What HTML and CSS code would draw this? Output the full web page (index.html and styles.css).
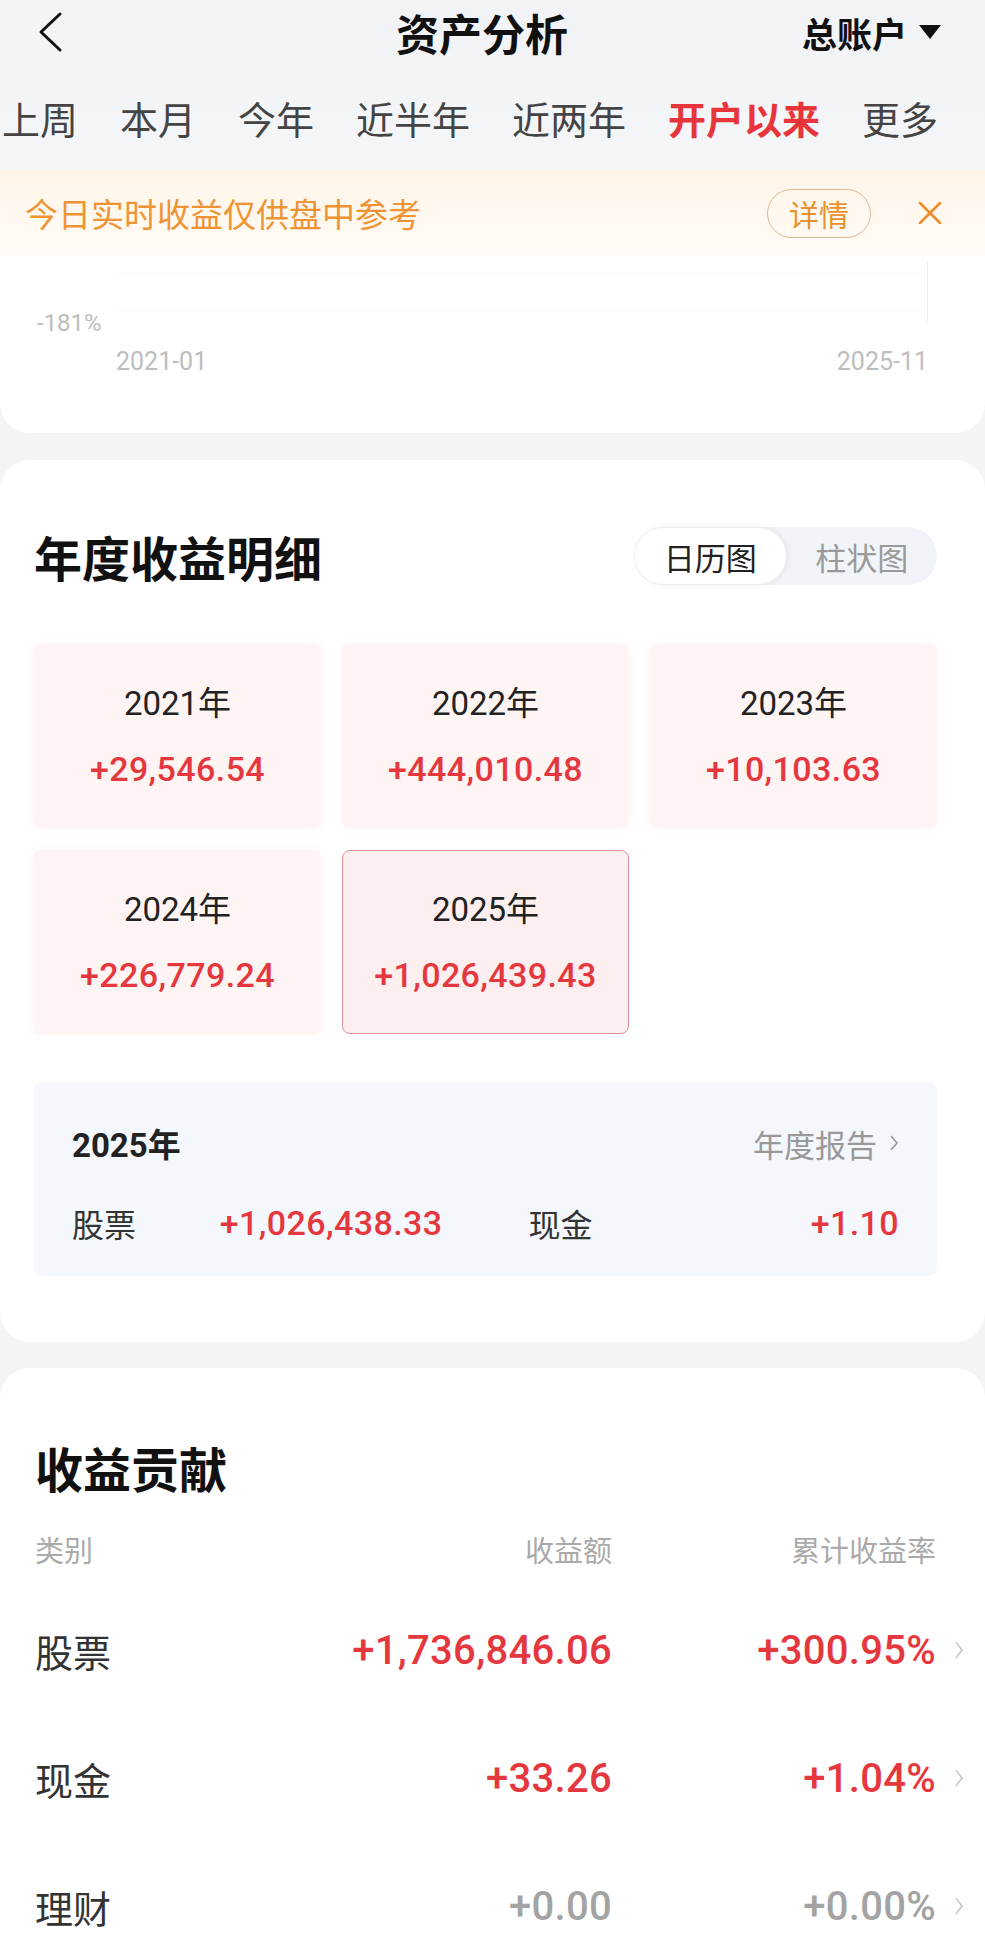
FILE: index.html
```html
<!DOCTYPE html>
<html lang="zh-CN">
<head>
  <meta charset="UTF-8" />
  <meta name="viewport" content="width=device-width, initial-scale=1.0" />
  <title>资产分析</title>
  <link rel="stylesheet" href="styles.css">
</head>
<body>
  <header class="top">
    <div class="nav">
      <span class="back">
        <svg width="26" height="42" viewBox="0 0 26 42"><polyline points="23,3 4,21 23,39" fill="none" stroke="#111" stroke-width="3" stroke-linecap="round" stroke-linejoin="round"/></svg>
      </span>
      <h1 class="title">资产分析</h1>
      <span class="account">总账户
        <svg width="22" height="14" viewBox="0 0 22 14"><polygon points="0,0 22,0 11,14" fill="#111"/></svg>
      </span>
    </div>
    <nav class="tabs">
      <span>上周</span>
      <span>本月</span>
      <span>今年</span>
      <span>近半年</span>
      <span>近两年</span>
      <span class="active">开户以来</span>
      <span>更多</span>
    </nav>
    <div class="notice">
      <span class="notice-text">今日实时收益仅供盘中参考</span>
      <span class="pill">详情</span>
      <svg class="close" width="24" height="22" viewBox="0 0 24 22"><path d="M2 1 L22 21 M22 1 L2 21" stroke="#ee8c2b" stroke-width="2.6" stroke-linecap="round"/></svg>
    </div>
  </header>

  <!-- tail of the return curve card -->
  <section class="card chart">
    <div class="plot-row">
      <span class="y-label">-181%</span>
      <div class="plot"></div>
    </div>
    <div class="x-labels">
      <span>2021-01</span>
      <span>2025-11</span>
    </div>
  </section>

  <section class="card yearly">
    <div class="section-head">
      <h2>年度收益明细</h2>
      <div class="toggle">
        <span class="on">日历图</span>
        <span>柱状图</span>
      </div>
    </div>

    <div class="years">
      <div class="year-card">
        <span class="year">2021年</span>
        <span class="num up">+29,546.54</span>
      </div>
      <div class="year-card">
        <span class="year">2022年</span>
        <span class="num up">+444,010.48</span>
      </div>
      <div class="year-card">
        <span class="year">2023年</span>
        <span class="num up">+10,103.63</span>
      </div>
      <div class="year-card">
        <span class="year">2024年</span>
        <span class="num up">+226,779.24</span>
      </div>
      <div class="year-card selected">
        <span class="year">2025年</span>
        <span class="num up">+1,026,439.43</span>
      </div>
    </div>

    <div class="summary">
      <div class="summary-head">
        <span class="summary-year">2025年</span>
        <span class="report">年度报告
          <svg width="10" height="20" viewBox="0 0 10 20"><polyline points="2,3 8,10 2,17" fill="none" stroke="#999" stroke-width="1.6"/></svg>
        </span>
      </div>
      <div class="summary-body">
        <div class="pair"><span>股票</span><span class="num up">+1,026,438.33</span></div>
        <div class="pair"><span>现金</span><span class="num up">+1.10</span></div>
      </div>
    </div>
  </section>

  <section class="card contrib">
    <h2>收益贡献</h2>
    <div class="row head">
      <span>类别</span>
      <span class="right">收益额</span>
      <span class="right">累计收益率</span>
      <span></span>
    </div>
    <div class="row">
      <span class="name">股票</span>
      <span class="num up right">+1,736,846.06</span>
      <span class="num up right">+300.95%</span>
      <svg class="chev" width="10" height="24" viewBox="0 0 10 24"><polyline points="2,4 8,12 2,20" fill="none" stroke="#c4c4c4" stroke-width="1.5"/></svg>
    </div>
    <div class="row">
      <span class="name">现金</span>
      <span class="num up right">+33.26</span>
      <span class="num up right">+1.04%</span>
      <svg class="chev" width="10" height="24" viewBox="0 0 10 24"><polyline points="2,4 8,12 2,20" fill="none" stroke="#c4c4c4" stroke-width="1.5"/></svg>
    </div>
    <div class="row">
      <span class="name">理财</span>
      <span class="num flat right">+0.00</span>
      <span class="num flat right">+0.00%</span>
      <svg class="chev" width="10" height="24" viewBox="0 0 10 24"><polyline points="2,4 8,12 2,20" fill="none" stroke="#c4c4c4" stroke-width="1.5"/></svg>
    </div>
  </section>
</body>
</html>
```

FILE: styles.css
```css
* {
  box-sizing: border-box;
}
body {
  margin: 0;
  width: 985px;
  background: #f3f4f6;
  color: #222;
  font-family: "Noto Sans CJK SC", sans-serif;
  overflow-x: hidden;
}
h1, h2 {
  margin: 0;
}

/* header */
.top {
  background: linear-gradient(#f2f3f6, #f6f7f9);
}
.nav {
  height: 64px;
  padding: 0 44px 0 37px;
  display: grid;
  grid-template-columns: 1fr auto 1fr;
  align-items: center;
}
.back {
  display: flex;
}
.title {
  font-size: 43px;
  font-weight: 600;
  color: #111;
  line-height: 64px;
  margin-right: 14px;
}
.account {
  justify-self: end;
  display: flex;
  align-items: center;
  gap: 12px;
  font-size: 35px;
  font-weight: 600;
  color: #111;
}
.tabs {
  height: 106px;
  display: flex;
  align-items: center;
  gap: 42px;
  padding-left: 2px;
  font-size: 38px;
  color: #444;
  white-space: nowrap;
  overflow: hidden;
}
.tabs .active {
  color: #e8343b;
  font-weight: 700;
}
.notice {
  height: 86px;
  padding: 0 43px 0 25px;
  display: flex;
  align-items: center;
  background: linear-gradient(#fff5e8, #fffbf6);
}
.notice-text {
  flex: 1;
  font-size: 33px;
  color: #ef9434;
}
.pill {
  width: 104px;
  height: 49px;
  border: 1.5px solid #dcb898;
  border-radius: 25px;
  display: flex;
  align-items: center;
  justify-content: center;
  font-size: 30px;
  color: #e8922f;
  margin-right: 47px;
}

/* cards */
.card {
  background: #fff;
  border-radius: 30px;
}
.chart {
  border-radius: 0 0 30px 30px;
  padding: 6px 57px 56px 37px;
  font-family: Roboto, sans-serif;
  font-size: 24px;
  color: #bdbdbd;
}
.plot-row {
  height: 75px;
  display: flex;
  align-items: flex-start;
}
.y-label {
  width: 79px;
  align-self: flex-end;
  line-height: 28px;
}
.plot {
  flex: 1;
  height: 61px;
  border-right: 1.5px solid #eeeeee;
  background:
    linear-gradient(#fafafa, #fafafa) 0 11px / 100% 1px no-repeat,
    linear-gradient(#fafafa, #fafafa) 0 48px / 100% 1px no-repeat;
}
.x-labels {
  margin: 10px 0 0 79px;
  line-height: 30px;
  font-size: 25px;
  display: flex;
  justify-content: space-between;
}

.yearly {
  margin-top: 27px;
  padding: 67px 48px 66px 34px;
}
.section-head {
  height: 58px;
  display: flex;
  align-items: center;
  justify-content: space-between;
}
h2 {
  font-size: 48px;
  font-weight: 700;
  color: #111;
  line-height: 58px;
}
.toggle {
  width: 303px;
  height: 58px;
  border-radius: 29px;
  background: #f1f4f8;
  display: flex;
  font-size: 31px;
  color: #999;
}
.toggle span {
  flex: 1;
  display: flex;
  align-items: center;
  justify-content: center;
}
.toggle .on {
  background: #fff;
  color: #222;
  border-radius: 29px;
  border: 1px solid #eceef1;
  box-shadow: 2px 0 6px rgba(0, 0, 0, 0.06);
}

.num {
  font-family: Roboto, "Noto Sans CJK SC", sans-serif;
  font-weight: 500;
  font-size: 34px;
  letter-spacing: 0.4px;
}
.up {
  color: #e5383e;
}
.flat {
  color: #a3a3a3;
}

.years {
  margin-top: 59px;
  display: grid;
  grid-template-columns: repeat(3, 1fr);
  grid-auto-rows: 184px;
  gap: 22px 21px;
}
.year-card {
  display: flex;
  flex-direction: column;
  align-items: center;
  justify-content: center;
  gap: 25px;
  background: #fff4f4;
  box-shadow: 0 0 8px 2px #fff8f8;
  border-radius: 6px;
}
.year-card .year {
  font-family: Roboto, "Noto Sans CJK SC", sans-serif;
  font-size: 33px;
  color: #222;
  line-height: 40px;
}
.year-card .num {
  line-height: 40px;
}
.year-card.selected {
  background: #fdeef0;
  border: 1.5px solid #e19096;
  box-shadow: none;
  border-radius: 8px;
}

.summary {
  margin-top: 48px;
  height: 194px;
  padding: 41px 38px 0 38px;
  background: #f4f7fb;
  border-radius: 8px;
}
.summary-head {
  height: 40px;
  display: flex;
  align-items: center;
  justify-content: space-between;
}
.summary-year {
  font-family: Roboto, "Noto Sans CJK SC", sans-serif;
  font-size: 33px;
  font-weight: 700;
}
.report {
  display: flex;
  align-items: center;
  gap: 12px;
  font-size: 31px;
  color: #999;
}
.summary-body {
  margin-top: 40px;
  display: grid;
  grid-template-columns: 1fr 1fr;
  gap: 86px;
}
.pair {
  height: 40px;
  display: flex;
  align-items: center;
  justify-content: space-between;
  font-size: 32px;
  color: #333;
}

.contrib {
  margin-top: 26px;
  padding: 70px 21px 40px 35px;
  border-radius: 30px 30px 0 0;
}
.row {
  display: grid;
  grid-template-columns: 200px 1fr 324px 28px;
  align-items: center;
  height: 128px;
  font-size: 38px;
  color: #333;
}
.row .num {
  font-size: 40px;
  letter-spacing: 0.3px;
}
.row.head {
  margin: 32px 0 18px;
  height: 40px;
  font-size: 29px;
  color: #aaa;
}
.right {
  text-align: right;
}
.chev {
  justify-self: end;
}
```
